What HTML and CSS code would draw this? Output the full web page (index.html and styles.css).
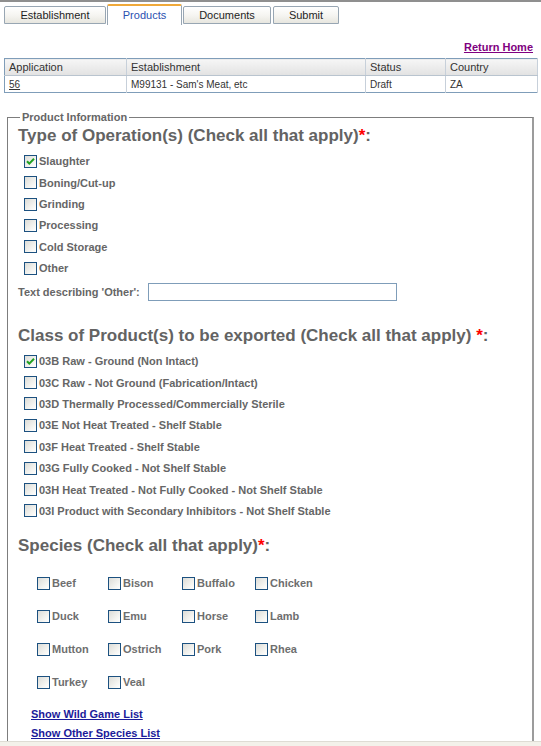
FILE: index.html
```html
<!DOCTYPE html>
<html>
<head>
<meta charset="utf-8">
<title>Products</title>
<link rel="stylesheet" href="styles.css">
</head>
<body>
<div class="topline"></div>
<div class="tabs">
  <div class="tab t1">Establishment</div>
  <div class="tab active t2">Products</div>
  <div class="tab t3">Documents</div>
  <div class="tab t4">Submit</div>
</div>
<div class="return"><a href="#">Return Home</a></div>
<table class="app">
  <thead>
    <tr><th class="c1">Application</th><th class="c2">Establishment</th><th class="c3">Status</th><th class="c4">Country</th></tr>
  </thead>
  <tbody>
    <tr><td><a href="#">56</a></td><td>M99131 - Sam's Meat, etc</td><td>Draft</td><td>ZA</td></tr>
  </tbody>
</table>
<fieldset class="prod">
  <legend>Product Information</legend>
  <h2 class="h-ops">Type of Operation(s) (Check all that apply)<span class="req">*</span>:</h2>
  <ul class="checks ops">
    <li><span class="cb checked"><svg width="11" height="11" viewBox="0 0 11 11"><path d="M2 5.2 L4.3 7.6 L9 2.8" fill="none" stroke="#21a121" stroke-width="2"/></svg></span>Slaughter</li>
    <li><span class="cb"></span>Boning/Cut-up</li>
    <li><span class="cb"></span>Grinding</li>
    <li><span class="cb"></span>Processing</li>
    <li><span class="cb"></span>Cold Storage</li>
    <li><span class="cb"></span>Other</li>
  </ul>
  <div class="other-row"><span class="other-label">Text describing 'Other':</span><span class="other-input"></span></div>
  <h2 class="h-class">Class of Product(s) to be exported (Check all that apply) <span class="req">*</span>:</h2>
  <ul class="checks cls">
    <li><span class="cb checked"><svg width="11" height="11" viewBox="0 0 11 11"><path d="M2 5.2 L4.3 7.6 L9 2.8" fill="none" stroke="#21a121" stroke-width="2"/></svg></span>03B Raw - Ground (Non Intact)</li>
    <li><span class="cb"></span>03C Raw - Not Ground (Fabrication/Intact)</li>
    <li><span class="cb"></span>03D Thermally Processed/Commercially Sterile</li>
    <li><span class="cb"></span>03E Not Heat Treated - Shelf Stable</li>
    <li><span class="cb"></span>03F Heat Treated - Shelf Stable</li>
    <li><span class="cb"></span>03G Fully Cooked - Not Shelf Stable</li>
    <li><span class="cb"></span>03H Heat Treated - Not Fully Cooked - Not Shelf Stable</li>
    <li><span class="cb"></span>03I Product with Secondary Inhibitors - Not Shelf Stable</li>
  </ul>
  <h2 class="h-species">Species (Check all that apply)<span class="req">*</span>:</h2>
  <div class="species">
    <div class="sp"><span class="cb"></span>Beef</div>
    <div class="sp"><span class="cb"></span>Bison</div>
    <div class="sp"><span class="cb"></span>Buffalo</div>
    <div class="sp"><span class="cb"></span>Chicken</div>
    <div class="sp"><span class="cb"></span>Duck</div>
    <div class="sp"><span class="cb"></span>Emu</div>
    <div class="sp"><span class="cb"></span>Horse</div>
    <div class="sp"><span class="cb"></span>Lamb</div>
    <div class="sp"><span class="cb"></span>Mutton</div>
    <div class="sp"><span class="cb"></span>Ostrich</div>
    <div class="sp"><span class="cb"></span>Pork</div>
    <div class="sp"><span class="cb"></span>Rhea</div>
    <div class="sp"><span class="cb"></span>Turkey</div>
    <div class="sp"><span class="cb"></span>Veal</div>
  </div>
  <div class="links">
    <a href="#">Show Wild Game List</a>
    <a href="#">Show Other Species List</a>
  </div>
</fieldset>
<div class="bottom-edge"></div>
</body>
</html>
```
FILE: styles.css
```css
* { box-sizing: border-box; }
html, body { margin: 0; padding: 0; background: #fff; overflow: hidden; }
body {
  font-family: "Liberation Sans", Arial, sans-serif;
  font-size: 11px;
  color: #666;
  width: 541px;
  height: 746px;
}
.topline { height: 2px; background: #8f8f8f; }
.tabs {
  display: flex;
  align-items: flex-end;
  height: 23px;
  padding-left: 4px;
}
.tab {
  height: 18px;
  margin-bottom: 1px;
  border: 1px solid #98a6b3;
  border-radius: 2px 2px 0 0;
  background: linear-gradient(#ffffff, #f5f4f0 55%, #e7e6df);
  color: #1e1e1e;
  text-align: center;
  line-height: 16px;
  font-size: 11px;
}
.t1 { width: 102px; }
.t2 { width: 75px; margin-left: 1px; }
.t3 { width: 88px; margin-left: 1px; }
.t4 { width: 66px; margin-left: 2px; }
.tab.active {
  height: 21px;
  margin-bottom: 0;
  background: #fff;
  border-top: 2px solid #f0a93a;
  border-bottom: none;
  color: #2b50b0;
  line-height: 18px;
}
.return {
  margin-top: 15px;
  height: 14px;
  line-height: 14px;
  text-align: right;
  padding-right: 8px;
}
.return a { color: #800080; font-weight: bold; font-size: 11px; text-decoration: underline; }
.app {
  margin: 4px 0 0 4px;
  width: 533px;
  border-collapse: collapse;
  border: 1px solid #7f9db9;
  table-layout: fixed;
}
.app th, .app td {
  height: 17px;
  padding: 0 0 0 4px;
  text-align: left;
  font-weight: normal;
  color: #333;
  border-right: 1px solid #c7d0da;
  white-space: nowrap;
}
.app th {
  font-size: 11px;
  background: linear-gradient(#f6f6f6, #e2e2e2);
  border-bottom: 1px solid #b9c4cf;
}
.app td { font-size: 10px; }
.app td a { color: #333; text-decoration: underline; }
.c1 { width: 122px; }
.c2 { width: 239px; }
.c3 { width: 80px; }
.c4 { width: 92px; }
.prod {
  margin: 18px 0 0 7px;
  width: 527px;
  padding: 0 0 40px 0;
  border: 1px solid #7d7d7d;
  border-right: 2px solid #9c9c9c;
  border-bottom: none;
}
.prod legend {
  margin-left: 12px;
  padding: 0 2px;
  font-size: 11px;
  font-weight: bold;
  line-height: 13px;
  color: #666;
}
h2 {
  margin: 0 0 0 10px;
  font-size: 17px;
  line-height: 20px;
  font-weight: bold;
  color: #636363;
  white-space: nowrap;
}
.req { color: #ff0000; }
.h-ops { margin-top: 2px; }
.h-class { margin-top: 24.7px; }
.h-species { margin-top: 14.5px; }
.checks {
  list-style: none;
  margin: 4.5px 0 0 16px;
  padding: 0;
}
.checks li {
  height: 21.42px;
  display: flex;
  align-items: center;
  font-weight: bold;
  color: #666;
  font-size: 11px;
}
.cb {
  display: inline-block;
  flex: none;
  width: 13px;
  height: 13px;
  margin-right: 2px;
  border: 1px solid #1c5180;
  background: linear-gradient(135deg, #dcdcd7, #f6f6f3 70%, #ffffff);
}
.cb svg { display: block; }
.other-row {
  margin: 4.3px 0 0 10px;
  height: 18px;
  display: flex;
  align-items: center;
  font-weight: bold;
  color: #666;
}
.other-label { width: 130px; }
.other-input {
  width: 249px;
  height: 18px;
  border: 1px solid #7f9db9;
  background: #fff;
}
.species {
  margin: 10.6px 0 0 29px;
  display: grid;
  grid-template-columns: 71px 74px 73px 73px;
  grid-auto-rows: 33px;
  align-items: center;
}
.sp {
  display: flex;
  align-items: center;
  font-weight: bold;
  color: #6e6e6e;
}
.links {
  margin: 6.5px 0 0 23px;
  display: flex;
  flex-direction: column;
  align-items: flex-start;
}
.links a {
  line-height: 19px;
  font-weight: bold;
  color: #1b1b9a;
  text-decoration: underline;
}
.bottom-edge {
  position: fixed;
  left: 0;
  right: 0;
  bottom: 0;
  height: 5px;
  background: #f3f1ea;
  border-top: 1px solid #dedcd4;
}
```
